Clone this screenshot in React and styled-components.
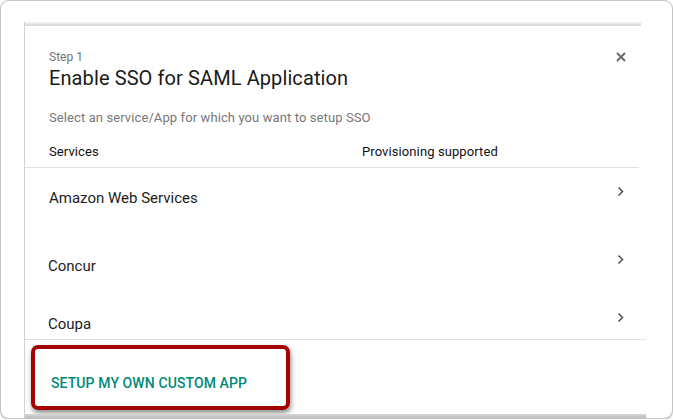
import styled, { createGlobalStyle } from "styled-components";

const services = [
  { name: "Amazon Web Services", height: 58, offset: 21 },
  { name: "Concur", height: 58, offset: 31 },
  { name: "Coupa", height: 55, offset: 31 },
];

const GlobalStyle = createGlobalStyle`
  html, body {
    margin: 0;
    padding: 0;
    background: #ffffff;
  }

  body {
    font-family: Roboto, "Liberation Sans", Arial, sans-serif;
    -webkit-font-smoothing: antialiased;
  }
`;

const Frame = styled.div`
  box-sizing: border-box;
  width: 673px;
  height: 419px;
  border: 1px solid #c4c4c4;
  border-radius: 9px;
  box-shadow: 0 1px 2px rgba(0, 0, 0, 0.25);
  background: #ffffff;
  overflow: hidden;
  padding: 21px 0 0 23px;
`;

const Dialog = styled.div`
  width: 621px;
  height: 396px;
  border-left: 1px solid #d2d2d2;
  display: flex;
  flex-direction: column;
`;

const Shade = styled.div`
  width: ${(p) => p.$width}px;
  height: ${(p) => p.$height}px;
  flex: none;
  background: linear-gradient(${(p) => p.$from}, ${(p) => p.$to});
`;

const Head = styled.div`
  position: relative;
  padding: 24px 0 0 24px;
  height: 110px;
  box-sizing: border-box;
`;

const Step = styled.div`
  font-size: 12px;
  line-height: 14px;
  color: #757575;
`;

const Title = styled.h1`
  margin: 2px 0 0;
  font-size: 20px;
  line-height: 24px;
  font-weight: 400;
  color: #1a1a1a;
  letter-spacing: 0.1px;
`;

const Subtitle = styled.div`
  margin-top: 20px;
  font-size: 13px;
  line-height: 16px;
  color: #777777;
  letter-spacing: 0.1px;
`;

const Close = styled.button`
  position: absolute;
  top: 25px;
  right: 19px;
  width: 12px;
  height: 12px;
  padding: 0;
  border: 0;
  background: none;
  display: flex;
  align-items: center;
  justify-content: center;
`;

const TableHead = styled.div`
  display: grid;
  grid-template-columns: 313px 1fr;
  padding: 0 0 0 24px;
  height: 32px;
  align-items: center;
  font-size: 13px;
  font-weight: 400;
  color: #111111;
  letter-spacing: 0.1px;
  width: 614px;
  box-sizing: border-box;
  border-bottom: 1px solid #e0e0e0;
`;

const Row = styled.div`
  display: flex;
  justify-content: space-between;
  align-items: flex-start;
  box-sizing: border-box;
  height: ${(p) => p.$height}px;
  padding: ${(p) => p.$offset}px 15px 0 ${(p) => (p.$first ? 24 : 23)}px;
  width: 614px;
`;

const ServiceName = styled.span`
  font-size: 15px;
  line-height: 18px;
  color: #1c1c1c;
`;

const Chevron = styled.svg`
  margin-top: -3px;
  flex: none;
`;

const Footer = styled.div`
  border-top: 1px solid #e0e0e0;
  flex: 1;
  padding: 5px 0 0 6px;
`;

const Highlight = styled.div`
  box-sizing: border-box;
  width: 259px;
  height: 65px;
  border: 4px solid #a50000;
  border-radius: 7px;
  box-shadow: 1px 3px 5px rgba(0, 0, 0, 0.45);
  display: flex;
  align-items: flex-end;
  padding: 0 0 15px 16px;
`;

const CustomApp = styled.button`
  border: 0;
  background: none;
  padding: 0;
  font-family: inherit;
  font-size: 14px;
  line-height: 16px;
  font-weight: 500;
  color: #00897b;
  letter-spacing: 0.1px;
  text-transform: uppercase;
`;

export default function App() {
  return (
    <>
      <GlobalStyle />
      <Frame>
        <Dialog>
          <Shade $width={616} $height={4} $from="#f4f4f4" $to="#d6d6d6" />
          <Head>
            <Step>Step 1</Step>
            <Title>Enable SSO for SAML Application</Title>
            <Subtitle>Select an service/App for which you want to setup SSO</Subtitle>
            <Close aria-label="Close">
              <svg width="10" height="10" viewBox="0 0 10 10">
                <path d="M1 1L9 9M9 1L1 9" stroke="#6b6b6b" strokeWidth="2" />
              </svg>
            </Close>
          </Head>
          <TableHead>
            <span>Services</span>
            <span>Provisioning supported</span>
          </TableHead>
          {services.map(({ name, height, offset }, i) => (
            <Row key={name} $height={height} $offset={offset} $first={i === 0}>
              <ServiceName>{name}</ServiceName>
              <Chevron width="7" height="11" viewBox="0 0 7 11">
                <path d="M1.5 1.5L5.5 5.5L1.5 9.5" fill="none" stroke="#555" strokeWidth="1.6" />
              </Chevron>
            </Row>
          ))}
          <Footer>
            <Highlight>
              <CustomApp>Setup my own custom app</CustomApp>
            </Highlight>
          </Footer>
          <Shade $width={621} $height={4} $from="#d8d8d8" $to="#bcbcbc" />
        </Dialog>
      </Frame>
    </>
  );
}
